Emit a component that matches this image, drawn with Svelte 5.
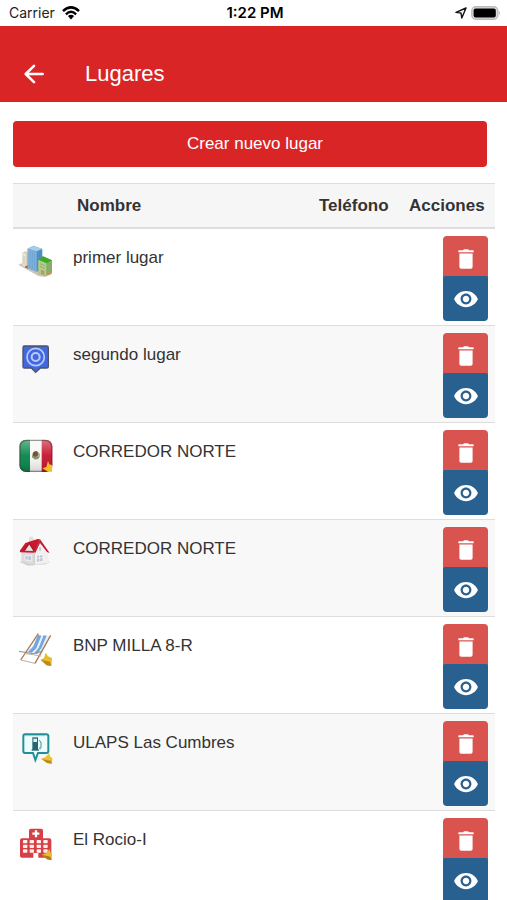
<script>
  const places = [
    { name: 'primer lugar', icon: 'city' },
    { name: 'segundo lugar', icon: 'target' },
    { name: 'CORREDOR NORTE', icon: 'mexico' },
    { name: 'CORREDOR NORTE', icon: 'house' },
    { name: 'BNP MILLA 8-R', icon: 'chair' },
    { name: 'ULAPS Las Cumbres', icon: 'fuel' },
    { name: 'El Rocio-I', icon: 'hospital' }
  ];
  const windowColumns = [39, 59, 80, 100];
  const windowRows = [69, 83, 97];
</script>

<div class="screen">
  <div class="status">
    <div class="carrier">
      <span>Carrier</span>
      <svg width="18" height="14" viewBox="0 0 18 14" aria-hidden="true">
        <path d="M1 5.2Q9-2.4 17 5.2" fill="none" stroke="#000" stroke-width="2.5" />
        <path d="M3.9 8.3Q9 3.4 14.1 8.3" fill="none" stroke="#000" stroke-width="2.4" />
        <path d="M5.9 10.1Q9 7.3 12.1 10.1L9 13.4Z" />
      </svg>
    </div>
    <strong>1:22 PM</strong>
    <div class="power">
      <svg width="12" height="12" viewBox="0 0 12 12" aria-hidden="true">
        <path d="M11 1L1 5.4 6 6 6.8 11Z" fill="none" stroke="#111" stroke-width="1.4" stroke-linejoin="round" />
      </svg>
      <svg width="30" height="14" viewBox="0 0 30 14" aria-hidden="true">
        <rect x=".8" y=".8" width="26" height="12.4" rx="4" fill="#ddd" stroke="#bbb" stroke-width="1.4" />
        <rect x="2.6" y="2.6" width="22.2" height="8.8" rx="2" />
        <path d="M28 5q1.800 2 0 4z" fill="#999" />
      </svg>
    </div>
  </div>

  <header>
    <button class="back" aria-label="Volver">
      <svg width="20" height="20" viewBox="0 0 20 20" aria-hidden="true">
        <path d="M18.7 10H2M10 1.8L1.7 10l8.3 8.2" fill="none" stroke="#fff" stroke-width="2.5" stroke-linecap="round" stroke-linejoin="round" />
      </svg>
    </button>
    <h1>Lugares</h1>
  </header>

  <main>
    <button class="create">Crear nuevo lugar</button>
    <table>
      <thead>
        <tr>
          <th class="pic"></th>
          <th>Nombre</th>
          <th class="phone">Teléfono</th>
          <th class="acts">Acciones</th>
        </tr>
      </thead>
      <tbody>
        {#each places as place}
          <tr>
            <td class="pic">
              {#if place.icon === 'city'}
                <svg viewBox="18 15 120 120" aria-hidden="true">
                  <path d="M25 86l20-8 80 36-20 9-20-3z" fill="#a99c90" opacity=".6" />
                  <path d="M37 50l9-5 12 5v41l-12 2-9-5z" fill="#d9d2bd" />
                  <path d="M37 50l10 5v38l-10-5z" fill="#eee8d8" />
                  <path d="M40 58v28M44 60v28" stroke="#c0b89e" stroke-width="1.5" />
                  <path d="M53 38l17-9 27 10v61l-17 7-27-11z" fill="#4b8fc4" />
                  <path d="M53 38l17-9 27 10-17 7z" fill="#a7cde9" />
                  <path d="M53 38l27 8v61l-27-11z" fill="#84b3da" />
                  <path d="M60 43v54M67 45v55M74 47v56" stroke="#5f9ccd" stroke-width="2" />
                  <path d="M85 72l14-11 27 12v39l-20 8-21-8z" fill="#86ac67" />
                  <path d="M85 72l14-11 27 12-17 9z" fill="#3daa2c" />
                  <path d="M85 72l24 10v38l-24-9z" fill="#b4cb8e" />
                  <path d="M90 83l14 6M90 91l14 6M114 88l8-4M114 98l8-4" stroke="#8fb272" stroke-width="3" />
                  <path d="M93 101l10 4v12l-10-4zM115 108l7-3v10l-7 3z" fill="#ca9457" />
                  <path d="M45 91l8-3v10l-8-4z" fill="#a96348" />
                </svg>
              {:else if place.icon === 'target'}
                <svg viewBox="18 22 120 120" aria-hidden="true">
                  <path d="M43 46h67q5 0 5 5v57q0 4-5 4H91l-14 13-13-13H43q-4 0-4-4V51q0-5 4-5z" fill="#4268df" stroke="#4b5365" stroke-width="4" />
                  <circle cx="77" cy="79" r="26" fill="none" stroke="#b8cafe" stroke-width="5" />
                  <circle cx="77" cy="79" r="12" fill="none" stroke="#b8cafe" stroke-width="6" />
                </svg>
              {:else if place.icon === 'mexico'}
                <svg viewBox="18 14 120 120" aria-hidden="true">
                  <defs>
                    <clipPath id="flag"><rect x="28" y="28" width="99" height="97" rx="20" /></clipPath>
                    <linearGradient id="gloss" x2="0" y2="1">
                      <stop stop-color="#fff" stop-opacity=".4" />
                      <stop offset=".5" stop-color="#fff" stop-opacity=".05" />
                      <stop offset="1" stop-opacity=".15" />
                    </linearGradient>
                  </defs>
                  <g clip-path="url(#flag)">
                    <path d="M28 28h34v97H28z" fill="#05854a" />
                    <path d="M60 28h35v97H60z" fill="#f7f6f3" />
                    <path d="M95 28h34v97H95z" fill="#c5132e" />
                    <path d="M28 28h100v97H28z" fill="url(#gloss)" />
                  </g>
                  <rect x="30" y="30" width="95" height="93" rx="19" fill="none" stroke="#3b342f" stroke-opacity=".5" stroke-width="4" />
                  <path d="M66 74q2-9 8-12l9 1q8 6 7 15l-6 9-10 1-8-7z" fill="#b8af91" />
                  <path d="M70 66l9-4 6 7-3 9-8 2-6-5z" fill="#75533b" />
                  <path d="M67 78q9 10 20 2" fill="none" stroke="#649074" stroke-width="4" />
                  <path d="M114 92l4 10 9 3-1 19h-12l-17-10 12-4z" fill="#f3bd25" />
                </svg>
              {:else if place.icon === 'house'}
                <svg viewBox="18 21 120 120" aria-hidden="true">
                  <path d="M29 111l20-8 71 7-13 8-53 4z" fill="#aaa" opacity=".5" />
                  <path d="M57 38l7-4 7 4v22H57z" fill="#e5dfd9" />
                  <path d="M34 78l28-19 16 22v39l-44-10z" fill="#dddcda" />
                  <path d="M73 78l17-36 24 34 2 37-43 7z" fill="#f1f0ef" />
                  <path d="M29 78l17-24 37-12 7 1-17 40-42-1z" fill="#c8192f" />
                  <path d="M42 77l16-23 15 24" fill="#e8e4e3" stroke="#b3162a" stroke-width="5" />
                  <path d="M73 81l17-38 29 41-8-3-21-27-14 30z" fill="#c71931" />
                  <path d="M45 92h19v16l-19-4zM80 91l19-2v20l-19 3zM86 65h8v14h-8z" fill="#b9c4d5" stroke="#fff" stroke-width="2" />
                  <path d="M54 92v15M89 90v20M80 100l19-2" stroke="#fff" stroke-width="2" />
                  <path d="M73 83v36" stroke="#bbb" stroke-width="2" />
                </svg>
              {:else if place.icon === 'chair'}
                <svg viewBox="18 22 120 120" aria-hidden="true">
                  <path d="M84 39l36 4-16 33-9 23-31-4-23-7 24-11z" fill="#e9f2fb" />
                  <path d="M84 40l10 2-15 38-14 13-11-2 16-17zM101 41l9 1-16 38-12 17-9-2 13-17z" fill="#73a6df" />
                  <path d="M27 89l42 7 28-7" fill="none" stroke="#89909b" stroke-width="3" />
                  <path d="M85 36L32 115M122 41L75 125" fill="none" stroke="#aa7954" stroke-width="4" />
                  <path d="M32 115l43 10M43 95l51 8" fill="none" stroke="#b9b0a8" stroke-width="3" />
                  <path d="M107 93l7 11 12 5-2 24-13-2-19-17 10-5z" fill="#e8bd29" />
                  <path d="M92 114l17 17 15 2-4-13z" fill="#bb8a25" />
                </svg>
              {:else if place.icon === 'fuel'}
                <svg viewBox="18 20 120 120" aria-hidden="true">
                  <path d="M45 45h64q6 0 6 6v44q0 6-6 6H84l-8 21-7-21H45q-5 0-5-6V51q0-6 5-6z" fill="#effcfc" stroke="#218f99" stroke-width="6" />
                  <path d="M45 49h62" stroke="#76d6db" stroke-width="3" />
                  <path d="M67 54h17v38H67z" fill="#236675" />
                  <path d="M70 58h11v10H70z" fill="#d9f1ef" />
                  <path d="M65 92h22" stroke="#236675" stroke-width="4" />
                  <path d="M87 63l6 5v18q-2 5-6-1" fill="none" stroke="#418b91" stroke-width="3" />
                  <path d="M117 101l4 11 6 4-1 17-15-2-17-13 13-5z" fill="#edc32b" />
                  <path d="M94 118l17 13 15 2-4-9-16-3z" fill="#b88b25" />
                </svg>
              {:else}
                <svg viewBox="18 18 120 120" aria-hidden="true">
                  <path d="M62 35h31q6 0 6 6v23h19q6 0 6 6v46q0 6-6 6H85v-14H70v14H36q-6 0-6-6V70q0-6 6-6h21V41q0-6 5-6z" fill="#d63f45" />
                  <path d="M78 40v21M67 50h21" stroke="#fff" stroke-width="7" />
                  {#each windowColumns as x}
                    {#each windowRows as y}
                      <rect {x} {y} width="13" height="10" rx="2" fill="#fff0ec" />
                    {/each}
                  {/each}
                  <path d="M119 96l3 12 4 2-1 20-14-3-15-14 13-5z" fill="#e8bd29" />
                  <path d="M96 113l15 14 14 3-4-11z" fill="#af7926" />
                </svg>
              {/if}
            </td>
            <td class="name">{place.name}</td>
            <td></td>
            <td class="tools">
              <div class="group">
                <button class="delete" aria-label="Eliminar">
                  <svg width="16" height="20" viewBox="0 0 16 20" aria-hidden="true">
                    <path d="M1 1.200h4L6 .3h4l1 .9h4q.7 0 .7.7v1.300H.3V1.900q0-.7.7-.7zM1.400 4.400h13.200V18q0 1.800-1.800 1.800H3.200Q1.400 19.800 1.400 18z" fill="#fff" />
                  </svg>
                </button>
                <button class="view" aria-label="Ver">
                  <svg width="26" height="26" viewBox="0 0 24 24" aria-hidden="true">
                    <path d="M12 4.500C7 4.500 2.730 7.610 1 12c1.730 4.390 6 7.500 11 7.500s9.270-3.110 11-7.500c-1.730-4.390-6-7.500-11-7.500zM12 17c-2.760 0-5-2.240-5-5s2.240-5 5-5 5 2.240 5 5-2.240 5-5 5zm0-8c-1.660 0-3 1.340-3 3s1.340 3 3 3 3-1.340 3-3-1.340-3-3-3z" fill="#fff" />
                  </svg>
                </button>
              </div>
            </td>
          </tr>
        {/each}
      </tbody>
    </table>
  </main>
</div>

<style>
  :global(body) {
    margin: 0;
    background: #fff;
  }
  .screen {
    display: flex;
    flex-direction: column;
    height: 100vh;
    overflow: hidden;
    background: #fff;
    color: #333;
    font: 17px/24px "Liberation Sans", Arial, sans-serif;
  }
  button {
    margin: 0;
    padding: 0;
    border: 0;
    font: inherit;
    color: #fff;
    cursor: pointer;
  }
  svg {
    display: block;
  }
  .status {
    flex: none;
    display: grid;
    grid-template-columns: 1fr auto 1fr;
    align-items: center;
    height: 26px;
    padding: 0 6px 0 9px;
    box-sizing: border-box;
    font: 14px/26px Inter, sans-serif;
    color: #222;
  }
  .status strong {
    font-size: 15px;
    font-weight: 600;
    color: #000;
  }
  .carrier,
  .power {
    display: flex;
    align-items: center;
    gap: 7px;
  }
  .power {
    justify-content: flex-end;
    gap: 4px;
  }
  header {
    flex: none;
    display: flex;
    align-items: center;
    gap: 41px;
    height: 76px;
    padding: 20px 24px 0;
    box-sizing: border-box;
    background: #da2527;
    color: #fff;
  }
  .back {
    background: none;
  }
  h1 {
    margin: 0;
    font-size: 22px;
    line-height: 28px;
    font-weight: 400;
  }
  main {
    flex: 1;
    min-height: 0;
    overflow-y: auto;
    scrollbar-width: none;
    padding: 19px 12px 0 13px;
  }
  .create {
    display: block;
    width: calc(100% - 8px);
    height: 46px;
    margin-bottom: 16px;
    border-radius: 4px;
    background: #da2527;
    text-indent: 10px;
  }
  table {
    width: 100%;
    table-layout: fixed;
    border-collapse: separate;
    border-spacing: 0;
  }
  th {
    height: 45px;
    box-sizing: border-box;
    padding: 0 0 0 11px;
    border-top: 1px solid #ddd;
    border-bottom: 1px solid #ddd;
    background: #f6f6f6;
    text-align: left;
  }
  th.pic {
    width: 53px;
  }
  th.phone {
    width: 90px;
  }
  th.acts {
    width: 97px;
  }
  td {
    height: 97px;
    box-sizing: border-box;
    padding: 0;
    border-top: 1px solid #ddd;
    vertical-align: top;
  }
  tbody tr:nth-child(even) {
    background: #f8f8f8;
  }
  td.pic {
    padding: 12px 0 0 3px;
  }
  td.pic svg {
    width: 40px;
    height: 40px;
  }
  td.name {
    padding: 17px 0 0 7px;
  }
  td.tools {
    padding: 7px 7px 4px 0;
  }
  .group {
    display: flex;
    flex-direction: column;
    align-items: flex-end;
  }
  .group button {
    display: flex;
    align-items: center;
    justify-content: center;
    width: 45px;
    height: 45px;
    border-radius: 4px;
  }
  .delete {
    background: #d9534f;
  }
  .group .view {
    margin-top: -5px;
    border-radius: 2px 2px 4px 4px;
    background: #286090;
  }
</style>
